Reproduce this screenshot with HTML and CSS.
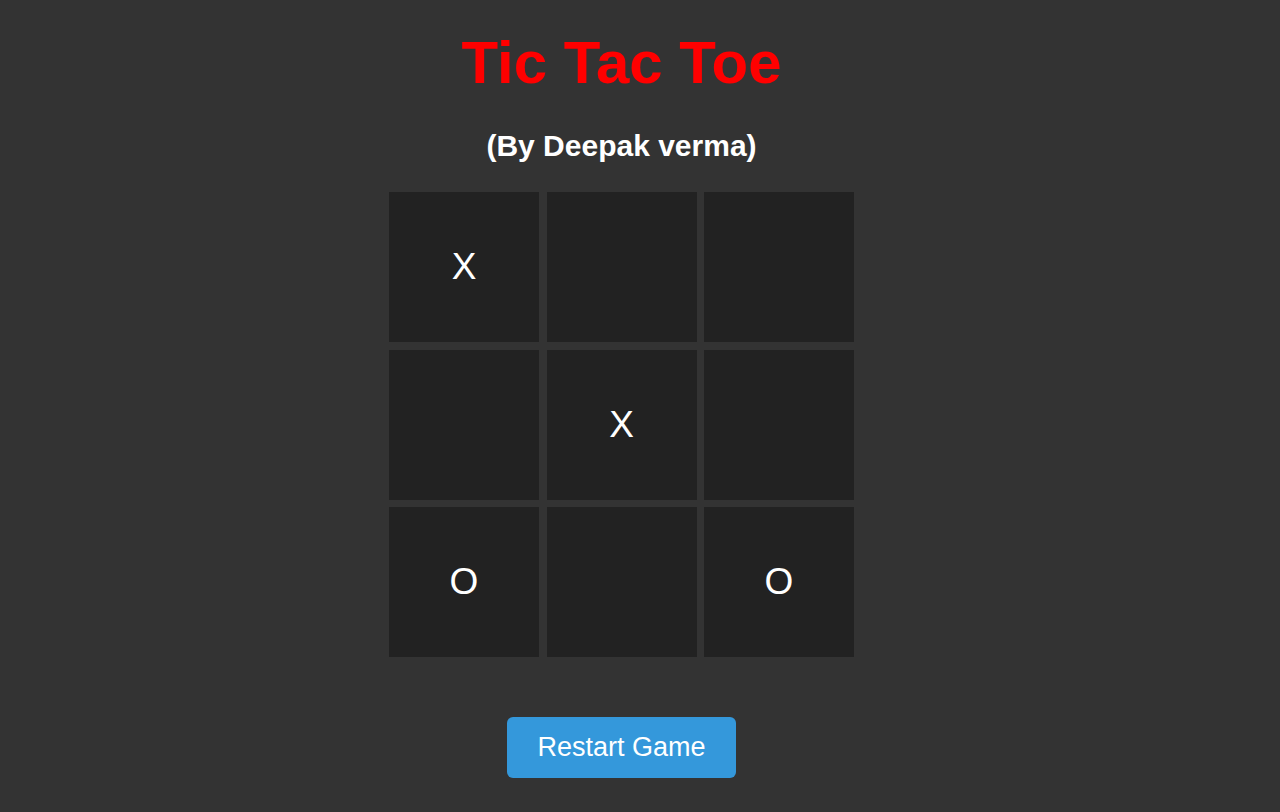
FILE: index.html
```html
<!DOCTYPE html>
<html lang="en">
<head>
<meta charset="UTF-8">
<title>Tic Tac Toe</title>
<link rel="stylesheet" href="styles.css">
</head>
<body>
<main class="page">
  <h1 class="title">Tic Tac Toe</h1>
  <h2 class="subtitle">(By Deepak verma)</h2>
  <div class="board">
    <div class="cell">X</div>
    <div class="cell"></div>
    <div class="cell"></div>
    <div class="cell"></div>
    <div class="cell">X</div>
    <div class="cell"></div>
    <div class="cell">O</div>
    <div class="cell"></div>
    <div class="cell">O</div>
  </div>
  <button class="restart">Restart Game</button>
</main>
</body>
</html>
```

FILE: styles.css
```css
html, body {
  margin: 0;
  padding: 0;
  background: #333333;
  height: 100%;
  overflow: hidden;
}

body {
  font-family: "Liberation Sans", Arial, Helvetica, sans-serif;
  color: #ffffff;
}

.page {
  width: 1243px;
  display: flex;
  flex-direction: column;
  align-items: center;
}

.title {
  margin: 28px 0 0;
  font-size: 60px;
  line-height: 69px;
  font-weight: bold;
  color: #ff0000;
}

.subtitle {
  margin: 32px 0 0;
  font-size: 30px;
  line-height: 34px;
  font-weight: bold;
  color: #ffffff;
}

.board {
  margin-top: 29px;
  display: grid;
  grid-template-columns: repeat(3, 150px);
  grid-template-rows: repeat(3, 150px);
  gap: 7.5px;
}

.cell {
  background: #222222;
  display: flex;
  align-items: center;
  justify-content: center;
  font-size: 37px;
  color: #ffffff;
}

.restart {
  margin-top: 60px;
  width: 229px;
  height: 61px;
  border: none;
  border-radius: 6px;
  background: #3498db;
  color: #ffffff;
  font-family: "Liberation Sans", Arial, Helvetica, sans-serif;
  font-size: 27px;
  padding: 0;
  cursor: pointer;
}
```
